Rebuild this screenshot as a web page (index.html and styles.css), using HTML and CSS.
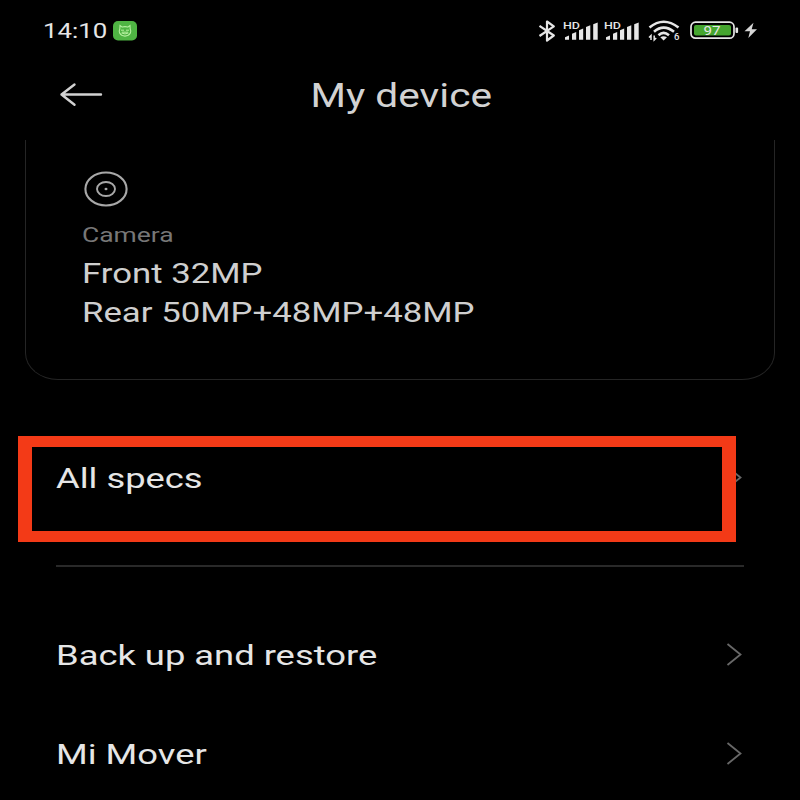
FILE: index.html
```
<!DOCTYPE html>
<html lang="en">
<head>
  <meta charset="UTF-8" />
  <meta name="viewport" content="width=device-width, initial-scale=1.0" />
  <title>My device</title>
  <link rel="stylesheet" href="styles.css">
</head>
<body>
  <div class="status-bar">
    <span class="clock wide">14:10</span>
    <svg class="app-badge" width="24" height="20" viewBox="0 0 24 20">
      <rect width="24" height="19.5" rx="5" fill="#4fb443" />
      <path d="M7 4.5l2.2 1.6q2.8-.9 5.6 0L17 4.5l.2 3.6q1 2 .2 4-1.6 3-5.4 3t-5.4-3q-.8-2 .2-4z" fill="none" stroke="#b5ef9f" stroke-width="1.1" />
      <path d="M8 9.2h3M13 9.2h3M8.5 12q3.5 1.8 7 0M9 11.2h6" fill="none" stroke="#b5ef9f" stroke-width="1" />
    </svg>

    <div class="status-icons">
      <svg class="bluetooth" width="18" height="22" viewBox="0 0 18 22">
        <path d="M1.5 5.8L15.8 15.5L9 20.5V1.5L15.8 6.3L1.5 16" fill="none" stroke="#e6e6e6" stroke-width="2.2" stroke-linejoin="round" />
      </svg>
      <svg class="signal" width="36" height="20" viewBox="0 0 36 20">
        <text x="0" y="7.6" textLength="17" lengthAdjust="spacingAndGlyphs">HD</text>
        <path d="M2 18.7v-2.5l4-1.8v4.3zM9 18.7v-6l4.2-1.8v7.800zM16 18.700V9.300l4.200-1.800v11.200zM23 18.700V6l4.300-1.800v14.500zM30.200 18.700V3.200l4.500-1.800v17.300z" fill="#e6e6e6" />
      </svg>
      <svg class="signal" width="36" height="20" viewBox="0 0 36 20">
        <text x="0" y="7.6" textLength="17" lengthAdjust="spacingAndGlyphs">HD</text>
        <path d="M2 18.7v-2.5l4-1.8v4.3zM9 18.7v-6l4.2-1.8v7.800zM16 18.700V9.300l4.200-1.800v11.200zM23 18.700V6l4.300-1.800v14.500zM30.200 18.700V3.200l4.500-1.800v17.300z" fill="#e6e6e6" />
      </svg>
      <svg class="wifi" width="34" height="22" viewBox="0 0 34 22">
        <path d="M1.500 7.500Q15.500-4 30.500 7.500M6 11.700Q15.500 3.500 26 11.700M10.500 15.300Q15.500 10.600 21 15.300" fill="none" stroke="#e6e6e6" stroke-width="2.600" />
        <path d="M12.300 17.300Q15.500 15 19 17.300L15.600 20.500z" fill="#e6e6e6" />
        <path d="M3 20v-4.500L1 17.500M6.200 15.500V20L8.200 18" fill="none" stroke="#e6e6e6" stroke-width="1.500" />
        <text x="26" y="20">6</text>
      </svg>
      <svg class="battery" width="50" height="19" viewBox="0 0 50 19">
        <rect x="1" y="1.200" width="43" height="16" rx="4.500" fill="none" stroke="#e6e6e6" stroke-width="1.700" />
        <rect x="4" y="4" width="37" height="10.500" rx="2" fill="#45a52f" />
        <rect x="45.500" y="6.500" width="2.600" height="5.500" rx="1" fill="#e6e6e6" />
        <text x="13.500" y="13.900" textLength="17" lengthAdjust="spacingAndGlyphs">97</text>
      </svg>
      <svg class="bolt" width="14" height="17" viewBox="0 0 14 17">
        <path d="M9.500.800L.500 9.300H6L4.300 16L13 7.300H7.700z" fill="#d6d6d6" />
      </svg>
    </div>
  </div>

  <header class="header">
    <svg class="back" width="44" height="26" viewBox="0 0 44 26">
      <path d="M42 12.500H2.500M15.500 2.500L2.500 12.500L15.500 22.700" fill="none" stroke="#d2d2d2" stroke-width="2.400" stroke-linecap="round" stroke-linejoin="round" />
    </svg>
    <h1 class="wide">My device</h1>
  </header>

  <section class="card">
    <svg class="camera-icon" width="46" height="38" viewBox="0 0 46 38">
      <ellipse cx="23" cy="19" rx="20.600" ry="16.500" fill="none" stroke="#a8a8a8" stroke-width="2.100" />
      <ellipse cx="23" cy="19" rx="9" ry="7" fill="none" stroke="#a8a8a8" stroke-width="1.900" />
      <ellipse cx="23" cy="19" rx="1.500" ry="1.300" fill="#a8a8a8" />
    </svg>
    <div class="card-label"><span class="wide">Camera</span></div>
    <div class="card-value"><span class="wide">Front 32MP</span></div>
    <div class="card-value"><span class="wide">Rear 50MP+48MP+48MP</span></div>
  </section>

  <main class="list">
    <div class="row">
      <span class="wide">All specs</span>
      <svg class="chevron" width="18" height="26" viewBox="0 0 18 26">
        <path d="M1.500 2L14.500 12.500L1.500 23" />
      </svg>
      <div class="highlight"></div>
    </div>
    <div class="divider"></div>
    <div class="row">
      <span class="wide">Back up and restore</span>
      <svg class="chevron" width="18" height="26" viewBox="0 0 18 26">
        <path d="M1.500 2L14.500 12.500L1.500 23" />
      </svg>
    </div>
    <div class="row">
      <span class="wide">Mi Mover</span>
      <svg class="chevron" width="18" height="26" viewBox="0 0 18 26">
        <path d="M1.500 2L14.500 12.500L1.500 23" />
      </svg>
    </div>
  </main>
</body>
</html>
```
FILE: styles.css
```
body {
  margin: 0;
  height: 800px;
  overflow: hidden;
  background: #000;
  color: #e6e6e6;
  font-family: Roboto, sans-serif;
}
/* the phone's type is wider than it is tall */
.wide {
  display: inline-block;
  transform: scaleX(1.23);
  transform-origin: left center;
  white-space: nowrap;
}
.status-bar {
  display: flex;
  align-items: center;
  height: 61px;
  padding: 0 42px 0 43px;
}
.clock {
  width: 70px;
  font-size: 21px;
}
.status-icons {
  display: flex;
  align-items: center;
  margin-left: auto;
}
.signal {
  margin-left: 5px;
}
.bluetooth + .signal {
  margin-left: 7px;
}
.wifi {
  margin-left: 8px;
}
.battery {
  margin-left: 8px;
}
.bolt {
  margin-left: 4px;
}
.status-icons text {
  font-size: 9.5px;
  font-weight: 500;
  fill: #e6e6e6;
}
.battery text {
  font-size: 13px;
  font-weight: 400;
}
.header {
  display: flex;
  justify-content: center;
  align-items: center;
  position: relative;
  height: 68px;
}
.back {
  position: absolute;
  left: 59px;
  top: 21px;
}
.header h1 {
  margin: 2px 0 0 2px;
  font-size: 32.4px;
  font-weight: 400;
  color: #d2d2d2;
  transform: scaleX(1.255);
  transform-origin: center;
}
.card {
  box-sizing: border-box;
  height: 240px;
  margin: 11px 25px 0;
  padding: 30px 0 0 56px;
  border: 1px solid #252525;
  border-top: none;
  border-radius: 0 0 33px 33px / 0 0 27px 27px;
}
.camera-icon {
  display: block;
  margin: 0 0 12px 1px;
}
.card-label {
  font-size: 20.5px;
  line-height: 30px;
  margin-bottom: 4px;
  color: #777;
}
.card-label .wide {
  transform: scaleX(1.29);
}
.card-value {
  font-size: 27.8px;
  line-height: 39.4px;
  color: #cfcfcf;
}
.card-value .wide {
  transform: scaleX(1.25);
}
.list {
  padding: 48px 56px 0;
}
.row {
  display: flex;
  justify-content: space-between;
  align-items: center;
  position: relative;
  height: 99px;
  font-size: 28.5px;
}
.row .wide {
  padding-top: 2px;
  transform: scaleX(1.275);
}
.chevron path {
  fill: none;
  stroke: #686868;
  stroke-width: 1.8;
}
.highlight {
  box-sizing: border-box;
  position: absolute;
  left: -38px;
  top: 8px;
  width: 718px;
  height: 106px;
  border: solid #f33a17;
  border-width: 11px 14px;
}
.divider {
  height: 2px;
  margin: 38px 0;
  background: #292929;
}
```
